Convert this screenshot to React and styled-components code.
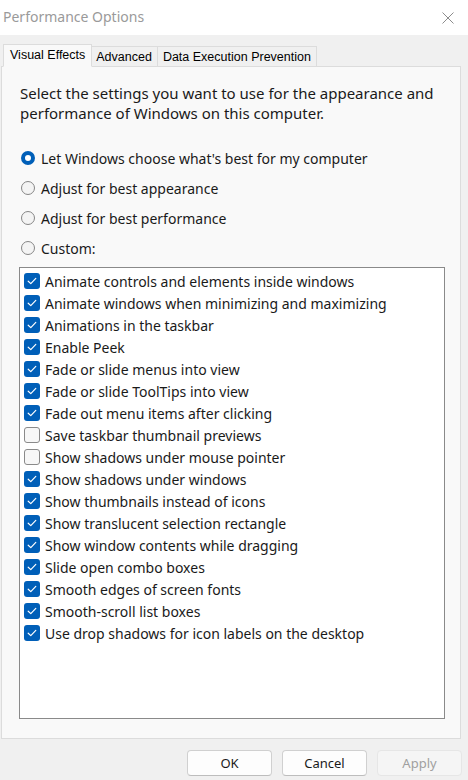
import React, { useState } from "react";
import styled, { createGlobalStyle } from "styled-components";

const GlobalStyle = createGlobalStyle`
  html, body {
    margin: 0;
    padding: 0;
    background: #f0f0f0;
  }
  body {
    font-family: "Segoe UI", "Noto Sans", "Open Sans", sans-serif;
    color: #1a1a1a;
  }
`;

const Window = styled.div`
  width: 468px;
  height: 780px;
  display: flex;
  flex-direction: column;
  background: #f0f0f0;
  overflow: hidden;
`;

const TitleBar = styled.div`
  height: 35px;
  flex: none;
  background: #ffffff;
  display: flex;
  align-items: center;
  justify-content: space-between;
  padding-left: 3px;
  box-sizing: border-box;
`;

const Title = styled.div`
  font-size: 14px;
  color: #9a9a9a;
  margin-top: -2px;
`;

const CloseButton = styled.button`
  width: 44px;
  height: 35px;
  border: none;
  background: transparent;
  display: flex;
  align-items: center;
  justify-content: center;
  padding: 0;
  margin-right: -2px;
  cursor: pointer;
`;

const TabStrip = styled.div`
  display: flex;
  align-items: flex-end;
  margin-top: 8px;
  padding-left: 3px;
  height: 23px;
  position: relative;
  z-index: 1;
`;

const Tab = styled.div`
  font-family: "Liberation Sans", "DejaVu Sans", sans-serif;
  font-size: 12.5px;
  height: ${(p) => (p.active ? "23px" : "20px")};
  box-sizing: border-box;
  padding: ${(p) => (p.active ? "0 6px 1px 6px" : "0 5px")};
  margin-right: ${(p) => (p.active ? "-1px" : "0")};
  display: flex;
  align-items: center;
  background: ${(p) => (p.active ? "#f9f9f9" : "#f0f0f0")};
  border: 1px solid #dcdcdc;
  border-bottom: ${(p) => (p.active ? "1px solid #f9f9f9" : "none")};
  margin-bottom: ${(p) => (p.active ? "-1px" : "0")};
  color: #000;
  z-index: ${(p) => (p.active ? 2 : 1)};
  position: relative;
  & + & {
    border-left: ${(p) => (p.active ? "1px solid #dcdcdc" : "none")};
  }
`;

const Panel = styled.div`
  margin: 0 7px 0 1px;
  height: 673px;
  box-sizing: border-box;
  background: #f9f9f9;
  border: 1px solid #dcdcdc;
  padding: 16px 15px 19px 17px;
  display: flex;
  flex-direction: column;
`;

const Description = styled.p`
  margin: 0;
  font-size: 15px;
  line-height: 20px;
  color: #1a1a1a;
  padding-left: 1px;
`;

const RadioGroup = styled.div`
  margin-top: 20px;
  display: flex;
  flex-direction: column;
`;

const RadioRow = styled.label`
  height: 30px;
  display: flex;
  align-items: center;
  gap: 6px;
  font-size: 14px;
  cursor: default;
  padding-left: 2px;
`;

const RadioDot = styled.span`
  width: 14px;
  height: 14px;
  box-sizing: border-box;
  border-radius: 50%;
  flex: none;
  background: ${(p) => (p.checked ? "#ffffff" : "#f4f4f4")};
  border: ${(p) => (p.checked ? "4px solid #005fb8" : "1px solid #868686")};
`;

const ListBox = styled.div`
  margin-top: 4px;
  flex: 1;
  background: #ffffff;
  border: 1px solid #8a8a8a;
  padding: 2px 4px;
  display: flex;
  flex-direction: column;
`;

const CheckRow = styled.label`
  height: 22px;
  display: flex;
  align-items: center;
  gap: 5px;
  font-size: 14px;
  cursor: default;
`;

const Box = styled.span`
  width: 16px;
  height: 16px;
  box-sizing: border-box;
  border-radius: 3px;
  flex: none;
  display: flex;
  align-items: center;
  justify-content: center;
  background: ${(p) => (p.checked ? "#005fb8" : "#f7f7f7")};
  border: ${(p) => (p.checked ? "none" : "1px solid #8a8a8a")};
`;

const Footer = styled.div`
  display: flex;
  justify-content: flex-end;
  gap: 10px;
  padding: 11px 6px 0 0;
`;

const Button = styled.button`
  width: 85px;
  height: 26px;
  box-sizing: border-box;
  border-radius: 4px;
  border: 1px solid ${(p) => (p.disabled ? "#e6e6e6" : "#d0d0d0")};
  border-bottom-color: ${(p) => (p.disabled ? "#e6e6e6" : "#bdbdbd")};
  background: ${(p) => (p.disabled ? "#f5f5f5" : "#fdfdfd")};
  color: ${(p) => (p.disabled ? "#a0a0a0" : "#1a1a1a")};
  font-family: "Segoe UI", "Noto Sans", sans-serif;
  font-size: 13px;
  padding: 0;
`;

const Check = () => (
  <svg width="10" height="8" viewBox="0 0 10 8">
    <path d="M1.2 4.2 L3.8 6.6 L8.8 1.4" fill="none" stroke="#ffffff" strokeWidth="1.2" strokeLinecap="round" strokeLinejoin="round" />
  </svg>
);

const radios = [
  "Let Windows choose what's best for my computer",
  "Adjust for best appearance",
  "Adjust for best performance",
  "Custom:",
];

const effects = [
  ["Animate controls and elements inside windows", true],
  ["Animate windows when minimizing and maximizing", true],
  ["Animations in the taskbar", true],
  ["Enable Peek", true],
  ["Fade or slide menus into view", true],
  ["Fade or slide ToolTips into view", true],
  ["Fade out menu items after clicking", true],
  ["Save taskbar thumbnail previews", false],
  ["Show shadows under mouse pointer", false],
  ["Show shadows under windows", true],
  ["Show thumbnails instead of icons", true],
  ["Show translucent selection rectangle", true],
  ["Show window contents while dragging", true],
  ["Slide open combo boxes", true],
  ["Smooth edges of screen fonts", true],
  ["Smooth-scroll list boxes", true],
  ["Use drop shadows for icon labels on the desktop", true],
];

const App = () => {
  const [mode, setMode] = useState(0);
  const [checks, setChecks] = useState(effects.map((e) => e[1]));

  return (
    <Window>
      <GlobalStyle />
      <TitleBar>
        <Title>Performance Options</Title>
        <CloseButton aria-label="Close">
          <svg width="12" height="12" viewBox="0 0 12 12">
            <path d="M0.5 0.5 L11.5 11.5 M11.5 0.5 L0.5 11.5" stroke="#8c8c8c" strokeWidth="1" />
          </svg>
        </CloseButton>
      </TitleBar>

      <TabStrip>
        <Tab active>Visual Effects</Tab>
        <Tab>Advanced</Tab>
        <Tab>Data Execution Prevention</Tab>
      </TabStrip>

      <Panel>
        <Description>
          Select the settings you want to use for the appearance and
          <br />
          performance of Windows on this computer.
        </Description>

        <RadioGroup>
          {radios.map((label, i) => (
            <RadioRow key={label} onClick={() => setMode(i)}>
              <RadioDot checked={mode === i} />
              {label}
            </RadioRow>
          ))}
        </RadioGroup>

        <ListBox>
          {effects.map(([label], i) => (
            <CheckRow
              key={label}
              onClick={() => {
                const next = checks.slice();
                next[i] = !next[i];
                setChecks(next);
                setMode(3);
              }}
            >
              <Box checked={checks[i]}>{checks[i] && <Check />}</Box>
              {label}
            </CheckRow>
          ))}
        </ListBox>
      </Panel>

      <Footer>
        <Button>OK</Button>
        <Button>Cancel</Button>
        <Button disabled>Apply</Button>
      </Footer>
    </Window>
  );
};

export default App;
